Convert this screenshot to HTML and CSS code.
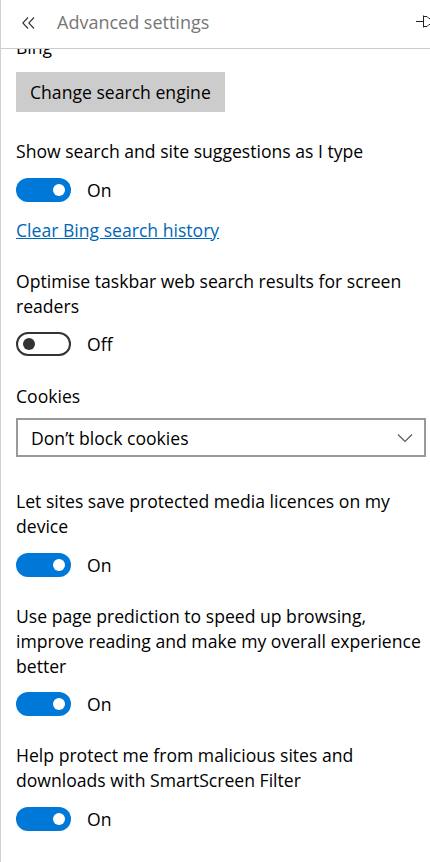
FILE: index.html
```html
<!DOCTYPE html>
<html lang="en">
<head>
<meta charset="utf-8">
<title>Advanced settings</title>
<link rel="stylesheet" href="styles.css">
</head>
<body>
<div class="panel">
  <header class="header">
    <svg class="back" width="13" height="12" viewBox="0 0 13 12">
      <path d="M6 0.5 L0.8 6 L6 11.5 M12 0.5 L6.8 6 L12 11.5" fill="none" stroke="#333" stroke-width="1.1"/>
    </svg>
    <span class="title">Advanced settings</span>
    <svg class="pin" width="16" height="16" viewBox="0 0 16 16">
      <path d="M1 7.5 H8 M8.5 1.5 V13.5 M8.5 2.5 H12 L14 4.5 H17 M8.5 12.5 H12 L14 10.5 H17" fill="none" stroke="#222" stroke-width="1"/>
    </svg>
  </header>
  <main class="content">
    <div class="label clipped">Bing</div>
    <button class="btn">Change search engine</button>

    <section class="setting">
      <div class="label">Show search and site suggestions as I type</div>
      <div class="toggle-row"><span class="toggle on"><span class="knob"></span></span><span class="state">On</span></div>
    </section>
    <a class="link" href="#">Clear Bing search history</a>

    <section class="setting after-link">
      <div class="label">Optimise taskbar web search results for screen<br>readers</div>
      <div class="toggle-row"><span class="toggle off"><span class="knob"></span></span><span class="state">Off</span></div>
    </section>

    <section class="setting cookies">
      <div class="label">Cookies</div>
      <div class="select">
        <span>Don’t block cookies</span>
        <svg class="chev" width="16" height="10" viewBox="0 0 16 10"><path d="M1 1.5 L8 8.5 L15 1.5" fill="none" stroke="#555" stroke-width="1.1"/></svg>
      </div>
    </section>

    <section class="setting after-select">
      <div class="label">Let sites save protected media licences on my<br>device</div>
      <div class="toggle-row"><span class="toggle on"><span class="knob"></span></span><span class="state">On</span></div>
    </section>

    <section class="setting">
      <div class="label">Use page prediction to speed up browsing,<br>improve reading and make my overall experience<br>better</div>
      <div class="toggle-row"><span class="toggle on"><span class="knob"></span></span><span class="state">On</span></div>
    </section>

    <section class="setting">
      <div class="label">Help protect me from malicious sites and<br>downloads with SmartScreen Filter</div>
      <div class="toggle-row"><span class="toggle on"><span class="knob"></span></span><span class="state">On</span></div>
    </section>
  </main>
</div>
</body>
</html>
```
FILE: styles.css
```css
html, body {
  margin: 0;
  padding: 0;
  background: #fff;
}
body {
  font-family: "Open Sans", "Noto Sans", "DejaVu Sans", sans-serif;
  color: #000;
  width: 430px;
  height: 862px;
  overflow: hidden;
}
.panel {
  height: 862px;
  border-left: 1px solid #cfcfcf;
  display: flex;
  flex-direction: column;
  overflow: hidden;
}
.header {
  height: 48px;
  flex: none;
  border-bottom: 1px solid #cccccc;
  display: flex;
  align-items: center;
  position: relative;
}
.back {
  display: block;
  margin-left: 21px;
  margin-right: 22px;
  margin-top: -3px;
  flex: none;
}
.title {
  font-size: 18px;
  color: #767676;
  margin-top: -4px;
}
.pin {
  position: absolute;
  left: 414px;
  top: 14px;
  overflow: visible;
}
.content {
  flex: 1;
  overflow: hidden;
  padding: 0 4px 0 15px;
}
.label {
  font-size: 17.6px;
  line-height: 25px;
  white-space: nowrap;
}
.clipped {
  margin-top: -14px;
}
.btn {
  display: block;
  margin-top: 12px;
  height: 40px;
  padding: 0 14px;
  background: #cccccc;
  border: none;
  font-family: inherit;
  font-size: 17.6px;
  color: #000;
  width: 209px;
  text-align: left;
  white-space: nowrap;
}
.setting {
  margin-top: 27px;
}
.setting.after-link {
  margin-top: 26px;
}
.setting.cookies {
  margin-top: 28px;
}
.setting.after-select {
  margin-top: 32px;
}
.toggle-row {
  display: flex;
  align-items: center;
  margin-top: 13.5px;
  height: 24px;
  margin-bottom: 1px;
}
.toggle {
  box-sizing: border-box;
  width: 55px;
  height: 24px;
  border-radius: 12px;
  display: flex;
  align-items: center;
  flex: none;
}
.toggle.on {
  background: #0078d7;
  justify-content: flex-end;
  padding-right: 6px;
}
.toggle.off {
  border: 2px solid #333;
  padding-left: 5px;
}
.knob {
  width: 12px;
  height: 12px;
  border-radius: 50%;
}
.on .knob { background: #fff; }
.off .knob { background: #333; }
.state {
  font-size: 17.6px;
  margin-left: 16px;
  line-height: 24px;
}
.link {
  display: block;
  margin-top: 16px;
  font-size: 17.6px;
  line-height: 25px;
  color: #0067b8;
  text-decoration: underline;
  width: max-content;
}
.select {
  box-sizing: border-box;
  margin-top: 9px;
  height: 39px;
  border: 2px solid #999;
  display: flex;
  align-items: center;
  justify-content: space-between;
  padding: 0 11px 0 13px;
  font-size: 17.6px;
}
.chev {
  display: block;
}
```
